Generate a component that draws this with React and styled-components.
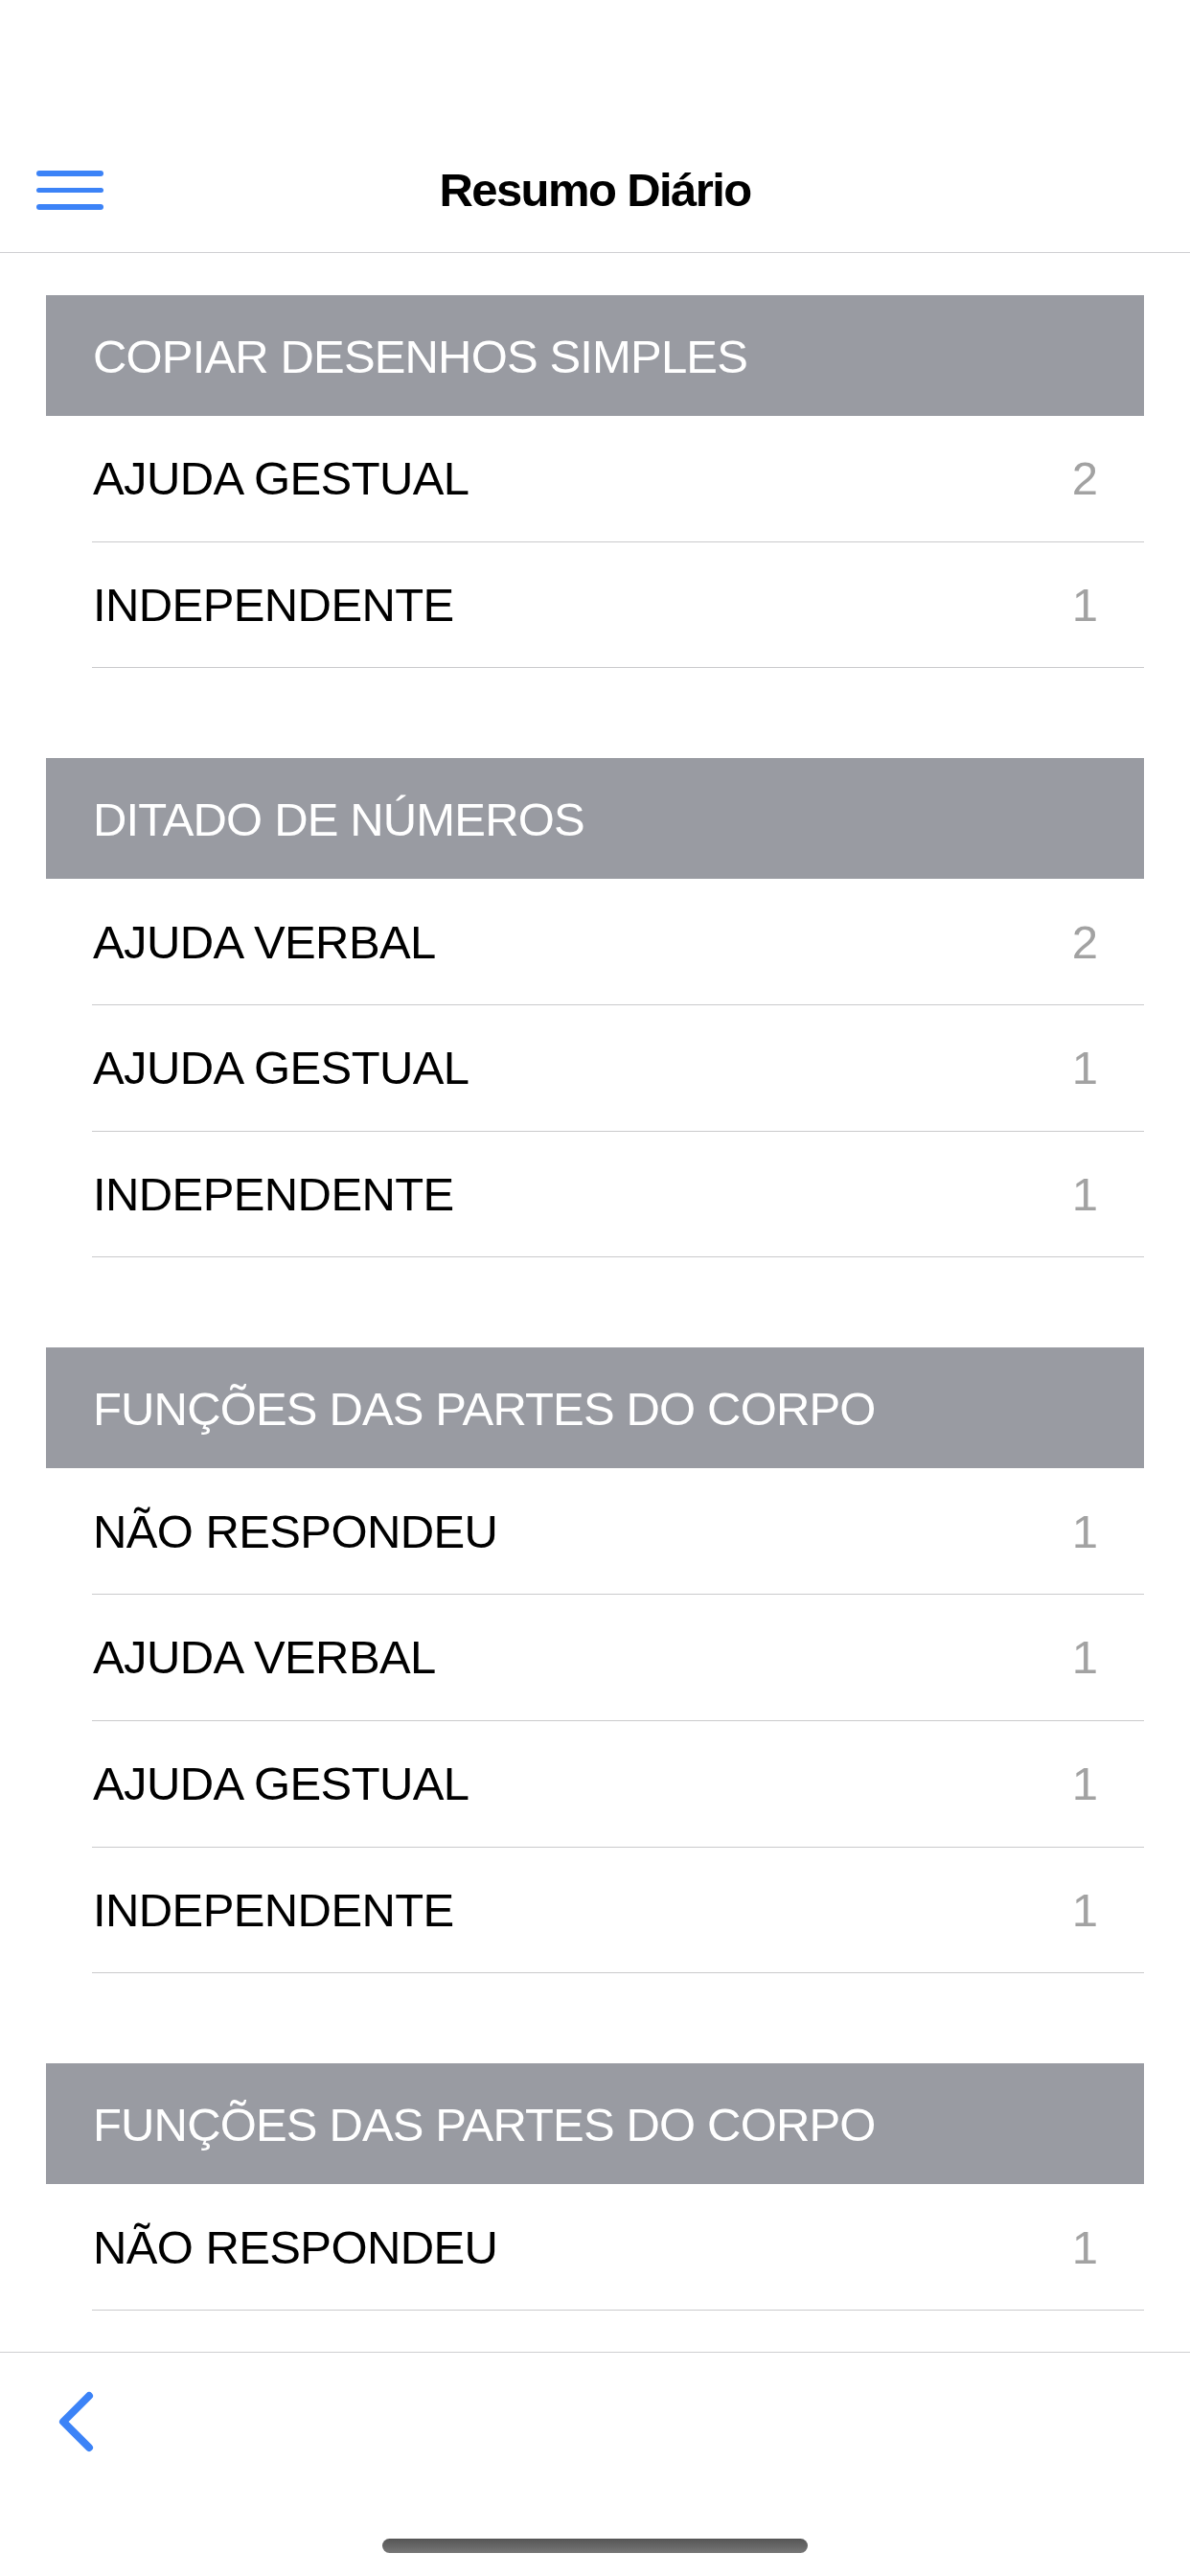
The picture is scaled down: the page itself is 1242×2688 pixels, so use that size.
import React from "react";
import styled, { createGlobalStyle } from "styled-components";

const GlobalStyle = createGlobalStyle`
  html, body {
    margin: 0;
    padding: 0;
    background: #ffffff;
  }
  body {
    font-family: "Liberation Sans", Arial, sans-serif;
    -webkit-font-smoothing: antialiased;
  }
  * { box-sizing: border-box; }
`;

const Screen = styled.div`
  width: 1242px;
  height: 2688px;
  display: flex;
  flex-direction: column;
  background: #ffffff;
  overflow: hidden;
`;

const TopBar = styled.header`
  flex: none;
  height: 264px;
  padding-top: 132px;
  border-bottom: 1px solid #cfcfd2;
  background: #ffffff;
`;

const NavRow = styled.div`
  height: 131px;
  display: grid;
  grid-template-columns: 200px 1fr 200px;
  align-items: center;
`;

const MenuButton = styled.button`
  justify-self: start;
  margin-left: 38px;
  margin-top: 2px;
  padding: 0;
  border: 0;
  background: none;
  display: flex;
  flex-direction: column;
  gap: 12px;
  width: 70px;
`;

const MenuLine = styled.span`
  display: block;
  height: 5.5px;
  width: 70px;
  border-radius: 3px;
  background: #3c83f7;
`;

const Title = styled.h1`
  margin: 0;
  text-align: center;
  font-family: "Liberation Sans", Arial, sans-serif;
  font-weight: 700;
  font-size: 49px;
  letter-spacing: -1.6px;
  color: #000000;
`;

const ScrollArea = styled.main`
  flex: 1;
  overflow: hidden;
  padding: 44px 48px 0 48px;
  display: flex;
  flex-direction: column;
  gap: 94px;
`;

const Section = styled.section`
  display: flex;
  flex-direction: column;
`;

const SectionHeader = styled.div`
  height: 126px;
  background: #999ba2;
  display: flex;
  align-items: center;
  padding-left: 49px;
  padding-top: 2px;
  color: #ffffff;
  font-size: 49px;
  letter-spacing: -0.85px;
`;

const Row = styled.div`
  height: 131.7px;
  margin-left: 48px;
  border-bottom: 1px solid #cacacc;
  display: flex;
  align-items: center;
  justify-content: space-between;
  padding: 0 48px 0 1px;
`;

const RowLabel = styled.span`
  font-size: 49px;
  letter-spacing: -0.6px;
  color: #000000;
`;

const RowCount = styled.span`
  font-size: 49px;
  color: #a2a2a2;
`;

const BottomBar = styled.footer`
  flex: none;
  height: 234px;
  border-top: 1px solid #cfcfd2;
  background: #ffffff;
  display: flex;
  flex-direction: column;
`;

const ToolRow = styled.div`
  height: 144px;
  display: flex;
  align-items: center;
  padding-left: 58px;
`;

const BackButton = styled.button`
  border: 0;
  background: none;
  padding: 0;
  display: flex;
  width: 44px;
  height: 66px;
`;

const HomeArea = styled.div`
  flex: 1;
  display: flex;
  justify-content: center;
  padding-top: 50px;
`;

const HomeIndicator = styled.div`
  width: 444px;
  height: 15px;
  border-radius: 8px;
  background: linear-gradient(180deg, #555555 0%, #777777 100%);
`;

const sections = [
  {
    title: "COPIAR DESENHOS SIMPLES",
    rows: [
      ["AJUDA GESTUAL", 2],
      ["INDEPENDENTE", 1],
    ],
  },
  {
    title: "DITADO DE NÚMEROS",
    rows: [
      ["AJUDA VERBAL", 2],
      ["AJUDA GESTUAL", 1],
      ["INDEPENDENTE", 1],
    ],
  },
  {
    title: "FUNÇÕES DAS PARTES DO CORPO",
    rows: [
      ["NÃO RESPONDEU", 1],
      ["AJUDA VERBAL", 1],
      ["AJUDA GESTUAL", 1],
      ["INDEPENDENTE", 1],
    ],
  },
  {
    title: "FUNÇÕES DAS PARTES DO CORPO",
    rows: [["NÃO RESPONDEU", 1]],
  },
];

export default function App() {
  return (
    <>
      <GlobalStyle />
      <Screen>
        <TopBar>
          <NavRow>
            <MenuButton aria-label="Menu">
              <MenuLine />
              <MenuLine />
              <MenuLine />
            </MenuButton>
            <Title>Resumo Diário</Title>
            <span />
          </NavRow>
        </TopBar>
        <ScrollArea>
          {sections.map((s, i) => (
            <Section key={i}>
              <SectionHeader>{s.title}</SectionHeader>
              {s.rows.map(([label, count], j) => (
                <Row key={j}>
                  <RowLabel>{label}</RowLabel>
                  <RowCount>{count}</RowCount>
                </Row>
              ))}
            </Section>
          ))}
        </ScrollArea>
        <BottomBar>
          <ToolRow>
            <BackButton aria-label="Voltar">
              <svg width="44" height="66" viewBox="0 0 44 66" fill="none">
                <path
                  d="M35 6 L8 33 L35 60"
                  stroke="#3c83f7"
                  strokeWidth="8"
                  strokeLinecap="round"
                  strokeLinejoin="round"
                />
              </svg>
            </BackButton>
          </ToolRow>
          <HomeArea>
            <HomeIndicator />
          </HomeArea>
        </BottomBar>
      </Screen>
    </>
  );
}
